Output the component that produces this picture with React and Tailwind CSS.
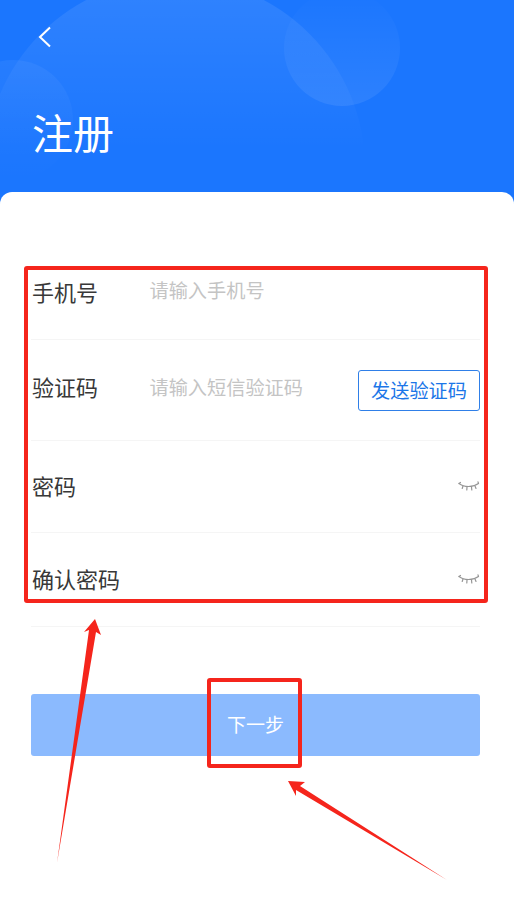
function EyeClosed() {
    return (
        <svg width="22" height="12" viewBox="0 0 22 12" fill="none" stroke="#969696" strokeWidth="1.2" strokeLinecap="round">
            <path d="M1 2.5C6 6.5 15 6.5 20.5 2.5" />
            <path d="M1 2.5L2.5 1.5M5 5L4.2 7.5M9 6L8.8 9M13.5 6L13.8 9M17 5L18 7.5M20.5 2.5L20 0.8" />
        </svg>
    );
}

function Row({ label, height, labelClass = "-mt-1", children }) {
    return (
        <div className={`flex items-center border-b border-[#f5f5f5] ${height}`}>
            <span className={`w-[118.5px] shrink-0 pl-px text-[22px] leading-none text-[#383838] ${labelClass}`}>{label}</span>
            {children}
        </div>
    );
}

function App() {
    return (
        <div className="relative min-h-[899px] overflow-hidden bg-white font-['Noto_Sans_CJK_SC','Liberation_Sans',sans-serif]">
            <header className="relative h-[212px] overflow-hidden bg-[#1b76fe] px-[32px]">
                <div className="absolute left-[-15px] top-[-22px] h-[380px] w-[380px] rounded-full bg-gradient-to-b from-white/10 to-white/0 to-45%" />
                <div className="absolute left-[284px] top-[-10px] h-[116px] w-[116px] rounded-full bg-gradient-to-t from-white/[0.08] to-white/0" />
                <div className="absolute left-[-47px] top-[60px] h-[120px] w-[120px] rounded-full bg-gradient-to-b from-white/5 to-white/0" />
                <svg className="relative mt-[26px] ml-[6px]" width="14" height="22" viewBox="0 0 14 22" fill="none" stroke="white" strokeWidth="2">
                    <path d="M12 1.5L2 11L12 20.5" />
                </svg>
                <h1 className="relative mt-[53px] text-[41px] font-normal leading-[60px] text-white">注册</h1>
            </header>

            <main className="relative -mt-5 rounded-t-xl bg-white pl-[31px] pr-[34px] pt-[54px]">
                <Row label="手机号" height="h-[94px]">
                    <span className="-mt-1 text-[19.2px] leading-none text-[#c4c4c4]">请输入手机号</span>
                </Row>
                <Row label="验证码" height="h-[101px]" labelClass="-mt-2">
                    <span className="-mt-1 text-[19.2px] leading-none text-[#c4c4c4]">请输入短信验证码</span>
                    <button className="ml-auto flex h-[41px] w-[122px] items-center justify-center rounded-[3px] border border-[#2f7fe8] text-[19.2px] text-[#1b76e8]">
                        发送验证码
                    </button>
                </Row>
                <Row label="密码" height="h-[92px]">
                    <span className="ml-auto">
                        <EyeClosed />
                    </span>
                </Row>
                <Row label="确认密码" height="h-[94px]">
                    <span className="ml-auto">
                        <EyeClosed />
                    </span>
                </Row>
                <button className="mt-[67px] flex h-[62px] w-full items-center justify-center rounded-[3px] bg-[#8bbafe] pb-[2px] text-[19px] text-white">
                    下一步
                </button>
            </main>

            {/* annotations drawn over the screenshot */}
            <div className="absolute left-[24px] top-[266px] h-[337px] w-[464px] rounded-[3px] border-4 border-[#f5251c]" />
            <div className="absolute left-[207px] top-[678px] h-[90px] w-[95px] rounded-[3px] border-4 border-[#f5251c]" />
            <svg className="absolute left-0 top-[600px]" width="514" height="299" viewBox="0 600 514 299" fill="#f5251c">
                <path d="M95 619L101 635L96 632L57 863L89 630L84 632Z" />
                <path d="M288 781L305 782L300 786L447 880L296 790L296 796Z" />
            </svg>
        </div>
    );
}

export default App;
